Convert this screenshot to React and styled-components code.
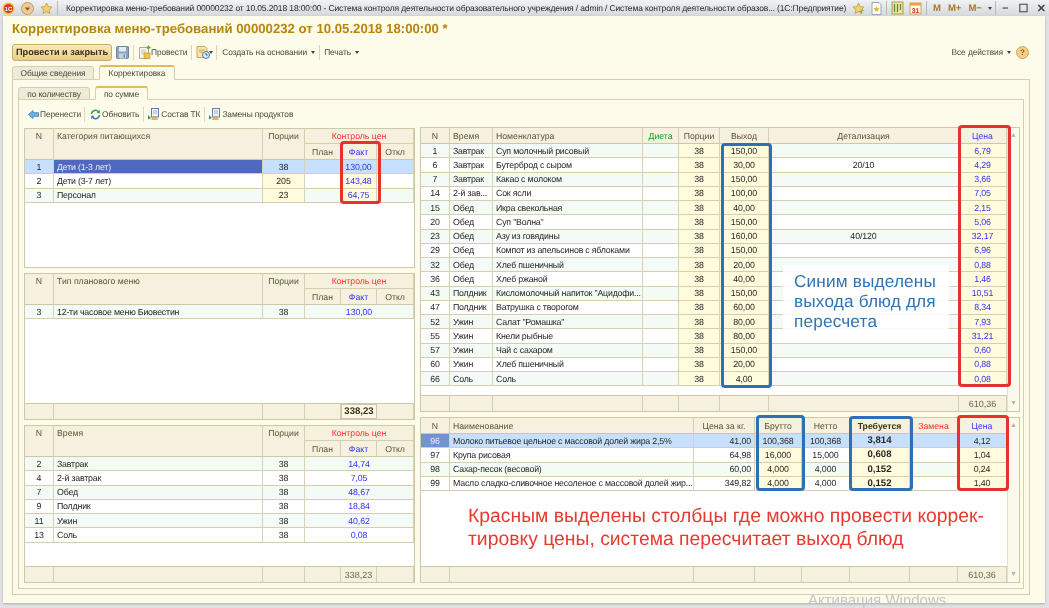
import React from "react";
import styled, { createGlobalStyle, css } from "styled-components";

const Global = createGlobalStyle`
  html, body { margin: 0; padding: 0; background: #dfe1e2; }
  body { font-family: "Liberation Sans", Arial, sans-serif; font-size: 8.7px; color: #222; overflow: hidden; text-rendering: geometricPrecision; }
`;

const Page = styled.div`
  position: relative; width: 1049px; height: 608px; overflow: hidden; background: #dfe1e2;
  filter: blur(0.35px);
`;
const TitleBar = styled.div`
  display: flex; align-items: center; height: 16px; padding-left: 2px;
  background: linear-gradient(#f1f2f3, #d4d8dc); color: #2a2a2a; font-size: 8.5px; letter-spacing: -0.13px; white-space: nowrap;
`;
const TitleText = styled.div`width: 786px; margin-left: 4px; overflow: hidden;`;
const TitleGroup = styled.div`display: flex; align-items: center; gap: ${p => p.$gap || 6}px; margin-left: ${p => p.$ml || 0}px;`;
const TitleSep = styled.span`width: 1px; height: 14px; background: #b6babd; margin: 0 ${p => p.$m || 4}px;`;
const MemoKey = styled.span`font-weight: bold; color: #a9742b; font-size: 9.5px; letter-spacing: 0;`;
const WinBtn = styled.span`width: 13px; text-align: center; color: #444; font-size: 11px; font-weight: bold;`;

const Shell = styled.div`
  display: flex; flex-direction: column; width: 1042px; height: 587px; margin-left: 3px;
  background: #fdfbea; box-shadow: 0 1px 2px rgba(120,120,120,.5);
`;
const Heading = styled.div`
  height: 26px; line-height: 26px; padding-left: 9px; margin-bottom: 1px;
  font-size: 13.2px; font-weight: bold; color: #b8860f; white-space: nowrap;
`;
const Toolbar = styled.div`
  display: flex; align-items: center; height: 18px; padding: 0 9px; color: #4a4a3a; font-size: 8.4px; letter-spacing: -0.1px; white-space: nowrap;
`;
const PrimaryButton = styled.div`
  display: flex; align-items: center; justify-content: center; width: 100px; height: 17px; box-sizing: border-box; margin-right: 4px;
  border: 1px solid #c9ab6a; border-radius: 3px; background: linear-gradient(#f9e9bf, #e9cd89);
  font-weight: bold; font-size: 9.2px; letter-spacing: 0; color: #3b2f14;
`;
const Sep = styled.span`width: 1px; height: 15px; background: #ddd7b8; margin: 0 ${p => p.$r ?? 4}px 0 ${p => p.$l ?? 4}px;`;
const Tool = styled.span`display: flex; align-items: center; gap: ${p => p.$gap ?? 2}px;`;
const Caret = styled.span`
  display: inline-block; margin-left: 4px; border: 2.5px solid transparent; border-top: 3px solid #444; border-bottom: 0;
`;
const Spacer = styled.div`flex: 1;`;
const Help = styled.span`
  display: flex; align-items: center; justify-content: center; width: 11px; height: 11px; margin: 0 7px 0 5px; border-radius: 50%;
  background: #f4cf87; border: 1px solid #d2a65a; color: #8a5a10; font-size: 8px; font-weight: bold;
`;

const TabStrip = styled.div`
  display: flex; align-items: flex-end; gap: ${p => p.$gap}px; height: ${p => p.$h}px; margin: ${p => p.$mt}px 0 -1px ${p => p.$ml}px; position: relative; z-index: 1;
`;
const Tab = styled.div`
  display: flex; align-items: center; justify-content: center; box-sizing: border-box;
  width: ${p => p.$w}px; border: 1px solid #d5cfaa; border-radius: 3px 3px 0 0; color: #4c4a38; font-size: 8.4px; letter-spacing: -0.1px;
  ${p => p.$active ? css`
    height: 100%; background: #fdfbea; border-bottom-color: #fdfbea; border-top: 2px solid #e8b95a;
  ` : css`
    height: calc(100% - 1px); background: #eeebd8;
  `}
`;
const OuterPanel = styled.div`
  box-sizing: border-box; height: 516px; margin: 0 15px 0 9px; border: 1px solid #d5cfaa; padding: 0 5px 5px;
  display: flex; flex-direction: column;
`;
const InnerPanel = styled.div`
  box-sizing: border-box; flex: 1; border: 1px solid #d5cfaa; padding: 6px 4px 5px 5px;
  display: flex; flex-direction: column;
`;
const SubToolbar = styled.div`
  display: flex; align-items: center; height: 16px; padding-left: 4px; margin-bottom: 5px; color: #4a4a3a; font-size: 8.4px; letter-spacing: -0.1px; white-space: nowrap;
`;
const Columns = styled.div`display: flex; gap: 5px; flex: 1;`;
const Column = styled.div`display: flex; flex-direction: column; gap: 5px; width: ${p => p.$w}px; padding-top: ${p => p.$pt || 0}px;`;

const TableBox = styled.div`
  display: flex; box-sizing: border-box; height: ${p => p.$h}px; border: 1px solid #cfc8a6; background: #fff;
`;
const TableMain = styled.div`flex: 1; min-width: 0; display: flex; flex-direction: column;`;
const Body = styled.div`flex: 1; background: #fff;`;
const ScrollBar = styled.div`
  width: 12px; display: flex; flex-direction: column; justify-content: space-between; align-items: center;
  background: #fbf9ea; border-left: 1px solid #e6e1c8; color: #b4b4aa; font-size: 7px; padding: 4px 0; box-sizing: border-box;
`;
const Grid = styled.div`
  display: grid; grid-template-columns: ${p => p.$cols};
`;
const HeadGrid = styled(Grid)`
  grid-template-rows: ${p => p.$rows};
  background: #f5f1de; border-bottom: 1px solid #cfc8a6;
`;
const HeadCell = styled.div`
  display: flex; justify-content: ${p => p.$left ? "flex-start" : "center"}; align-items: ${p => p.$top ? "flex-start" : "center"};
  padding: ${p => p.$top ? "2px" : "0"} 3px 0; box-sizing: border-box; overflow: hidden; white-space: nowrap;
  border-right: 1px solid #d5cfae;
  ${p => p.$rowSpan && css`grid-row: span ${p.$rowSpan};`}
  ${p => p.$colSpan && css`grid-column: span ${p.$colSpan}; border-bottom: 1px solid #d5cfae;`}
  font-size: 8.7px;
  font-weight: ${p => p.$bold ? "bold" : "normal"};
  color: ${p => ({ red: "#ff2a2a", blue: "#3434ff", green: "#12a02a" }[p.$c] || (p.$bold ? "#3a3110" : "#5a5436"))};
`;
const rowBg = { sel: "#c6e0ff", alt: "#f4fbf6", plain: "#fff" };
const Cell = styled.div`
  display: flex; align-items: center; box-sizing: border-box; height: 14.25px; padding: 0 3px;
  justify-content: ${p => p.$align === "left" ? "flex-start" : p.$align === "right" ? "flex-end" : "center"};
  border-right: 1px solid #d9d3b6; border-bottom: 1px solid #d5cfae;
  overflow: hidden; white-space: nowrap;
  letter-spacing: ${p => p.$bold ? 0 : p.$align === "left" ? -0.2 : -0.1}px;
  font-size: ${p => p.$bold ? 9.6 : 8.8}px; font-weight: ${p => p.$bold ? "bold" : "normal"};
  color: ${p => p.$blue ? "#3333f0" : "#262626"};
  background: ${p => rowBg[p.$tone]};
  ${p => p.$yellow && p.$tone !== "sel" && css`background: #fffbdc;`}
  ${p => p.$mark && css`background: #5068c0; color: #e8ecff;`}
  ${p => p.$markN && css`background: #6f94cf; color: #e8ecff;`}
  ${p => p.$span && css`grid-column: span ${p.$span};`}
`;
const FootCell = styled.div`
  display: flex; align-items: center; justify-content: center; height: 15px; box-sizing: border-box;
  background: #f5f1de; border-right: 1px solid #d5cfae; font-size: 9px; color: #6c6444;
  ${p => p.$strong && css`font-weight: bold; font-size: 9.6px; color: #3a3110; background: #fbf8e8; border: 1px solid #cfc8a6;`}
`;
const FootRow = styled(Grid)`border-top: 1px solid #cfc8a6;`;

const Highlight = styled.div`
  position: absolute; box-sizing: border-box; left: ${p => p.$x}px; top: ${p => p.$y}px; width: ${p => p.$w}px; height: ${p => p.$h}px;
  border: 3px solid ${p => p.$red ? "#e6312c" : "#2f6fb5"}; border-radius: 4px; pointer-events: none;
`;
const BlueNote = styled.div`
  position: absolute; left: 783px; top: 265px; width: 155px; height: 59px; padding: 6px 0 0 11px;
  background: rgba(255,255,255,.88); color: #2e74b5; font-size: 17.2px; line-height: 20.2px; letter-spacing: 0.01em; white-space: nowrap;
`;
const RedNote = styled.div`
  position: absolute; left: 468px; top: 505px; color: #e63a30; font-size: 19.35px; line-height: 23px; white-space: nowrap;
`;
const Watermark = styled.div`
  position: absolute; left: 808px; top: 592px; color: #c4c5c4; font-size: 15px; white-space: nowrap;
`;

/* ---------- icons ---------- */
const Ico = ({ w = 12, h = 12, children, vb }) => <svg width={w} height={h} viewBox={vb || `0 0 ${w} ${h}`} style={{ flex: "none" }}>{children}</svg>;
const LogoIcon = () => (
  <Ico w={13} h={13}><circle cx="6.5" cy="6.5" r="6" fill="#f5c33b" /><circle cx="6.5" cy="6.5" r="4.6" fill="#d9342b" /><text x="6.5" y="8.6" textAnchor="middle" fontSize="6" fontWeight="bold" fill="#fff" fontFamily="Liberation Sans">1С</text></Ico>
);
const DownCircle = () => (
  <Ico w={13} h={13}><circle cx="6.5" cy="6.5" r="6" fill="#eecb96" stroke="#c89a5c" /><path d="M3.8 5.5h5.4L6.5 8.6z" fill="#7a5a2c" /></Ico>
);
const Star = ({ fill = "#f3cf6d", stroke = "#c79a3a", badge }) => (
  <Ico w={13} h={13}><path d="M6.5 1l1.7 3.6 3.8.5-2.8 2.6.8 3.8-3.5-1.9-3.5 1.9.8-3.8L1 5.1l3.8-.5z" fill={fill} stroke={stroke} strokeWidth=".8" />{badge && <path d="M7 9h5l-2-2v4z" fill="#5aa83c" />}</Ico>
);
const DocStar = () => (
  <Ico w={11} h={13}><path d="M1 .5h7l2 2v10H1z" fill="#fdfdf5" stroke="#9aa6b8" /><path d="M5.5 4l1 2 2 .3-1.5 1.4.4 2-1.9-1-1.9 1 .4-2L2.5 6.3l2-.3z" fill="#e7b63e" /></Ico>
);
const BooksIcon = () => (
  <Ico w={13} h={14}><rect x="1" y="1" width="11" height="12" fill="#f2e3a0" stroke="#b09a50" /><path d="M3.5 3v8M6.5 3v8M9.5 3v6" stroke="#4f8f4a" strokeWidth="1.3" /></Ico>
);
const CalIcon = () => (
  <Ico w={13} h={14}><rect x="1" y="2" width="11" height="11" fill="#fff7e0" stroke="#c8a860" /><rect x="1" y="2" width="11" height="2.5" fill="#e8a040" /><text x="6.5" y="11.5" textAnchor="middle" fontSize="7" fontWeight="bold" fill="#d0382a" fontFamily="Liberation Sans">31</text></Ico>
);
const Disk = () => (
  <Ico w={13} h={13}><rect x=".5" y=".5" width="12" height="12" rx="1" fill="#8ea3bd" stroke="#6f839c" /><rect x="3" y="1" width="7" height="4.5" fill="#e4ebf3" /><rect x="3" y="7.5" width="7" height="5" fill="#c8d3e0" /><rect x="7.5" y="8.5" width="1.5" height="3" fill="#6f839c" /></Ico>
);
const PostDoc = () => (
  <Ico w={13} h={14}><path d="M1.5 2.5h7l2 2v9h-9z" fill="#fdfbe8" stroke="#a8a8a0" /><path d="M3 5h5M3 7h5M3 9h5" stroke="#b8c4d0" /><rect x="6" y="8" width="6" height="5.5" fill="#eec250" stroke="#b98e2a" strokeWidth=".6" /><path d="M10.5 .5v4M8.5 2.5h4" stroke="#5aa83c" strokeWidth="1.4" /></Ico>
);
const HistoryDoc = () => (
  <Ico w={14} h={14}><path d="M1 1.5h8l2 2v9H1z" fill="#f6e7a8" stroke="#c2a75e" /><path d="M3 5h6M3 7h4" stroke="#c2a75e" /><circle cx="10" cy="10" r="3.5" fill="#dfeaf6" stroke="#4a78b0" /><path d="M10 8v2h1.7" stroke="#2d5a90" fill="none" /></Ico>
);
const SmallCaret = styled.span`
  display: inline-block; margin-left: -1px; border: 2.5px solid transparent; border-top: 3px solid #444; border-bottom: 0;
`;
const ArrowMove = () => (
  <Ico w={11} h={11}><path d="M.5 5.5L5 1.5v2.2h5.5v3.6H5v2.2z" fill="#6db4e8" stroke="#3a7fbc" strokeWidth=".8" /></Ico>
);
const Refresh = () => (
  <Ico w={11} h={11}><path d="M1.5 5A4 4 0 0 1 8.5 2.7" fill="none" stroke="#3aa03a" strokeWidth="1.5" /><path d="M9.8 .8v3.4H6.5z" fill="#3aa03a" /><path d="M9.5 6A4 4 0 0 1 2.5 8.3" fill="none" stroke="#2f7fbf" strokeWidth="1.5" /><path d="M1.2 10.2V6.8h3.3z" fill="#2f7fbf" /></Ico>
);
const TreeDoc = () => (
  <Ico w={11} h={12}><rect x="3.5" y=".5" width="7" height="8.5" fill="#eef3fa" stroke="#5f7fa8" /><path d="M5 3h4M5 5h4" stroke="#9db1c9" /><path d="M0 7l3 3-3 1.5z" fill="#3c9a3c" /><path d="M3.5 11.5L6.5 8l3 3.5z" fill="#e9bd4c" stroke="#b98e2a" strokeWidth=".5" /></Ico>
);

/* ---------- data ---------- */
const LC = "29px 209px 42px 36px 36px 37px";
const RC1 = "29px 43px 150px 36px 41px 49px 190px 48px";
const RC2 = "29px 244px 61px 47px 48px 60px 48px 49px";

const LeftHead = ({ title }) => (
  <HeadGrid $cols={LC} $rows="15px 15px">
    <HeadCell $rowSpan={2} $top>N</HeadCell>
    <HeadCell $rowSpan={2} $top $left>{title}</HeadCell>
    <HeadCell $rowSpan={2} $top>Порции</HeadCell>
    <HeadCell $colSpan={3} $c="red">Контроль цен</HeadCell>
    <HeadCell>План</HeadCell>
    <HeadCell $c="blue">Факт</HeadCell>
    <HeadCell>Откл</HeadCell>
  </HeadGrid>
);

const LeftFoot = ({ value, strong }) => (
  <FootRow $cols={LC}>
    <FootCell /><FootCell /><FootCell /><FootCell />
    <FootCell $strong={strong}>{value}</FootCell>
    <FootCell />
  </FootRow>
);

const t1 = [
  { n: "1", name: "Дети (1-3 лет)", p: "38", f: "130,00", tone: "sel" },
  { n: "2", name: "Дети (3-7 лет)", p: "205", f: "143,48", tone: "plain" },
  { n: "3", name: "Персонал", p: "23", f: "64,75", tone: "alt" },
];
const t3 = [
  ["2", "Завтрак", "14,74"], ["4", "2-й завтрак", "7,05"], ["7", "Обед", "48,67"],
  ["9", "Полдник", "18,84"], ["11", "Ужин", "40,62"], ["13", "Соль", "0,08"],
];
const menu = [
  ["1", "Завтрак", "Суп молочный рисовый", "150,00", "", "6,79"],
  ["6", "Завтрак", "Бутерброд с сыром", "30,00", "20/10", "4,29"],
  ["7", "Завтрак", "Какао с молоком", "150,00", "", "3,66"],
  ["14", "2-й зав...", "Сок ясли", "100,00", "", "7,05"],
  ["15", "Обед", "Икра свекольная", "40,00", "", "2,15"],
  ["20", "Обед", "Суп \"Волна\"", "150,00", "", "5,06"],
  ["23", "Обед", "Азу из говядины", "160,00", "40/120", "32,17"],
  ["29", "Обед", "Компот из апельсинов с яблоками", "150,00", "", "6,96"],
  ["32", "Обед", "Хлеб пшеничный", "20,00", "", "0,88"],
  ["36", "Обед", "Хлеб ржаной", "40,00", "", "1,46"],
  ["43", "Полдник", "Кисломолочный напиток \"Ацидофи...", "150,00", "", "10,51"],
  ["47", "Полдник", "Ватрушка с творогом", "60,00", "", "8,34"],
  ["52", "Ужин", "Салат \"Ромашка\"", "80,00", "", "7,93"],
  ["55", "Ужин", "Кнели рыбные", "80,00", "", "31,21"],
  ["57", "Ужин", "Чай с сахаром", "150,00", "", "0,60"],
  ["60", "Ужин", "Хлеб пшеничный", "20,00", "", "0,88"],
  ["66", "Соль", "Соль", "4,00", "", "0,08"],
];
const goods = [
  ["96", "Молоко питьевое цельное с массовой долей жира 2,5%", "41,00", "100,368", "100,368", "3,814", "4,12"],
  ["97", "Крупа рисовая", "64,98", "16,000", "15,000", "0,608", "1,04"],
  ["98", "Сахар-песок (весовой)", "60,00", "4,000", "4,000", "0,152", "0,24"],
  ["99", "Масло сладко-сливочное несоленое с массовой долей жир...", "349,82", "4,000", "4,000", "0,152", "1,40"],
];

export default function App() {
  return (
    <Page>
      <Global />
      <TitleBar>
        <TitleGroup $gap={6}><LogoIcon /><DownCircle /><Star /></TitleGroup>
        <TitleSep $m={4} />
        <TitleText>Корректировка меню-требований 00000232 от 10.05.2018 18:00:00 - Система контроля деятельности образовательного учреждения / admin / Система контроля деятельности образов...  (1С:Предприятие)</TitleText>
        <TitleGroup $gap={6}><Star badge /><DocStar /></TitleGroup>
        <TitleSep $m={4} />
        <TitleGroup $gap={5}><BooksIcon /><CalIcon /></TitleGroup>
        <TitleSep $m={4} />
        <TitleGroup $gap={7} $ml={2}><MemoKey>M</MemoKey><MemoKey>M+</MemoKey><MemoKey>M−</MemoKey><SmallCaret /></TitleGroup>
        <TitleSep $m={3} />
        <TitleGroup $gap={5}><WinBtn>–</WinBtn><WinBtn>☐</WinBtn><WinBtn>✕</WinBtn></TitleGroup>
      </TitleBar>
      <Shell>
        <Heading>Корректировка меню-требований 00000232 от 10.05.2018 18:00:00 *</Heading>
        <Toolbar>
          <PrimaryButton>Провести и закрыть</PrimaryButton>
          <Disk />
          <Sep />
          <Tool $gap={0}><PostDoc />Провести</Tool>
          <Sep $l={4} $r={4} />
          <Tool $gap={0}><HistoryDoc /><SmallCaret /></Tool>
          <Sep $l={3} $r={5} />
          <Tool $gap={0}>Создать на основании<Caret /></Tool>
          <Sep />
          <Tool $gap={0}>Печать<Caret /></Tool>
          <Spacer />
          <Tool $gap={0}>Все действия<Caret /></Tool>
          <Help>?</Help>
        </Toolbar>
        <TabStrip $h={15} $gap={5} $mt={4} $ml={9}>
          <Tab $w={82}>Общие сведения</Tab>
          <Tab $w={76} $active>Корректировка</Tab>
        </TabStrip>
        <OuterPanel>
          <TabStrip $h={14} $gap={5} $mt={6} $ml={0}>
            <Tab $w={72}>по количеству</Tab>
            <Tab $w={53} $active>по сумме</Tab>
          </TabStrip>
          <InnerPanel>
            <SubToolbar>
              <Tool $gap={1}><ArrowMove />Перенести</Tool>
              <Sep $l={3} $r={5} />
              <Tool $gap={1}><Refresh />Обновить</Tool>
              <Sep />
              <Tool $gap={2}><TreeDoc />Состав ТК</Tool>
              <Sep />
              <Tool $gap={2}><TreeDoc />Замены продуктов</Tool>
            </SubToolbar>
            <Columns>
              <Column $w={391} $pt={1}>
                <TableBox $h={140}>
                  <TableMain>
                    <LeftHead title="Категория питающихся" />
                    {t1.map((r, i) => (
                      <Grid key={r.n} $cols={LC}>
                        <Cell $tone={r.tone}>{r.n}</Cell>
                        <Cell $tone={r.tone} $align="left" $mark={i === 0}>{r.name}</Cell>
                        <Cell $tone={r.tone} $yellow>{r.p}</Cell>
                        <Cell $tone={r.tone} />
                        <Cell $tone={r.tone} $yellow $blue>{r.f}</Cell>
                        <Cell $tone={r.tone} />
                      </Grid>
                    ))}
                    <Body />
                  </TableMain>
                </TableBox>
                <TableBox $h={147}>
                  <TableMain>
                    <LeftHead title="Тип планового меню" />
                    <Grid $cols={LC}>
                      <Cell $tone="alt">3</Cell>
                      <Cell $tone="alt" $align="left">12-ти часовое меню Биовестин</Cell>
                      <Cell $tone="alt">38</Cell>
                      <Cell $tone="alt" $span={3} $blue>130,00</Cell>
                    </Grid>
                    <Body />
                    <LeftFoot value="338,23" strong />
                  </TableMain>
                </TableBox>
                <TableBox $h={158}>
                  <TableMain>
                    <LeftHead title="Время" />
                    {t3.map((r, i) => (
                      <Grid key={r[0]} $cols={LC}>
                        <Cell $tone={i % 2 ? "plain" : "alt"}>{r[0]}</Cell>
                        <Cell $tone={i % 2 ? "plain" : "alt"} $align="left">{r[1]}</Cell>
                        <Cell $tone={i % 2 ? "plain" : "alt"}>38</Cell>
                        <Cell $tone={i % 2 ? "plain" : "alt"} $span={3} $blue>{r[2]}</Cell>
                      </Grid>
                    ))}
                    <Body />
                    <LeftFoot value="338,23" />
                  </TableMain>
                </TableBox>
              </Column>
              <Column $w={600}>
                <TableBox $h={285}>
                  <TableMain>
                    <HeadGrid $cols={RC1} $rows="15px">
                      <HeadCell>N</HeadCell>
                      <HeadCell $left>Время</HeadCell>
                      <HeadCell $left>Номенклатура</HeadCell>
                      <HeadCell $c="green">Диета</HeadCell>
                      <HeadCell>Порции</HeadCell>
                      <HeadCell>Выход</HeadCell>
                      <HeadCell>Детализация</HeadCell>
                      <HeadCell $c="blue">Цена</HeadCell>
                    </HeadGrid>
                    {menu.map((r, i) => {
                      const tone = i % 2 ? "plain" : "alt";
                      return (
                        <Grid key={r[0]} $cols={RC1}>
                          <Cell $tone={tone}>{r[0]}</Cell>
                          <Cell $tone={tone} $align="left">{r[1]}</Cell>
                          <Cell $tone={tone} $align="left">{r[2]}</Cell>
                          <Cell $tone={tone} />
                          <Cell $tone={tone} $yellow>38</Cell>
                          <Cell $tone={tone} $yellow>{r[3]}</Cell>
                          <Cell $tone={tone}>{r[4]}</Cell>
                          <Cell $tone={tone} $yellow $blue>{r[5]}</Cell>
                        </Grid>
                      );
                    })}
                    <Body />
                    <FootRow $cols={RC1}>
                      {[0, 1, 2, 3, 4, 5, 6].map(k => <FootCell key={k} />)}
                      <FootCell>610,36</FootCell>
                    </FootRow>
                  </TableMain>
                  <ScrollBar><span>▲</span><span>▼</span></ScrollBar>
                </TableBox>
                <TableBox $h={166}>
                  <TableMain>
                    <HeadGrid $cols={RC2} $rows="15px">
                      <HeadCell>N</HeadCell>
                      <HeadCell $left>Наименование</HeadCell>
                      <HeadCell>Цена за кг.</HeadCell>
                      <HeadCell>Брутто</HeadCell>
                      <HeadCell>Нетто</HeadCell>
                      <HeadCell $bold>Требуется</HeadCell>
                      <HeadCell $c="red">Замена</HeadCell>
                      <HeadCell $c="blue">Цена</HeadCell>
                    </HeadGrid>
                    {goods.map((r, i) => {
                      const tone = i === 0 ? "sel" : i === 2 ? "alt" : "plain";
                      return (
                        <Grid key={r[0]} $cols={RC2}>
                          <Cell $tone={tone} $markN={i === 0}>{r[0]}</Cell>
                          <Cell $tone={tone} $align="left">{r[1]}</Cell>
                          <Cell $tone={tone} $align="right">{r[2]}</Cell>
                          <Cell $tone={tone} $yellow>{r[3]}</Cell>
                          <Cell $tone={tone}>{r[4]}</Cell>
                          <Cell $tone={tone} $yellow $bold>{r[5]}</Cell>
                          <Cell $tone={tone} />
                          <Cell $tone={tone} $yellow>{r[6]}</Cell>
                        </Grid>
                      );
                    })}
                    <Body />
                    <FootRow $cols={RC2}>
                      {[0, 1, 2, 3, 4, 5, 6].map(k => <FootCell key={k} />)}
                      <FootCell>610,36</FootCell>
                    </FootRow>
                  </TableMain>
                  <ScrollBar><span>▲</span><span>▼</span></ScrollBar>
                </TableBox>
              </Column>
            </Columns>
          </InnerPanel>
        </OuterPanel>
      </Shell>
      <Highlight $red $x={340} $y={141} $w={41} $h={63} />
      <Highlight $red $x={958} $y={125} $w={53} $h={262} />
      <Highlight $x={721} $y={143} $w={51} $h={245} />
      <Highlight $x={756} $y={415} $w={49} $h={76} />
      <Highlight $x={849} $y={416} $w={64} $h={75} />
      <Highlight $red $x={957} $y={415} $w={52} $h={76} />
      <BlueNote>Синим выделены<br />выхода блюд для<br />пересчета</BlueNote>
      <RedNote>Красным выделены столбцы где можно провести коррек-<br />тировку цены, система пересчитает выход блюд</RedNote>
      <Watermark>Активация Windows</Watermark>
    </Page>
  );
}
